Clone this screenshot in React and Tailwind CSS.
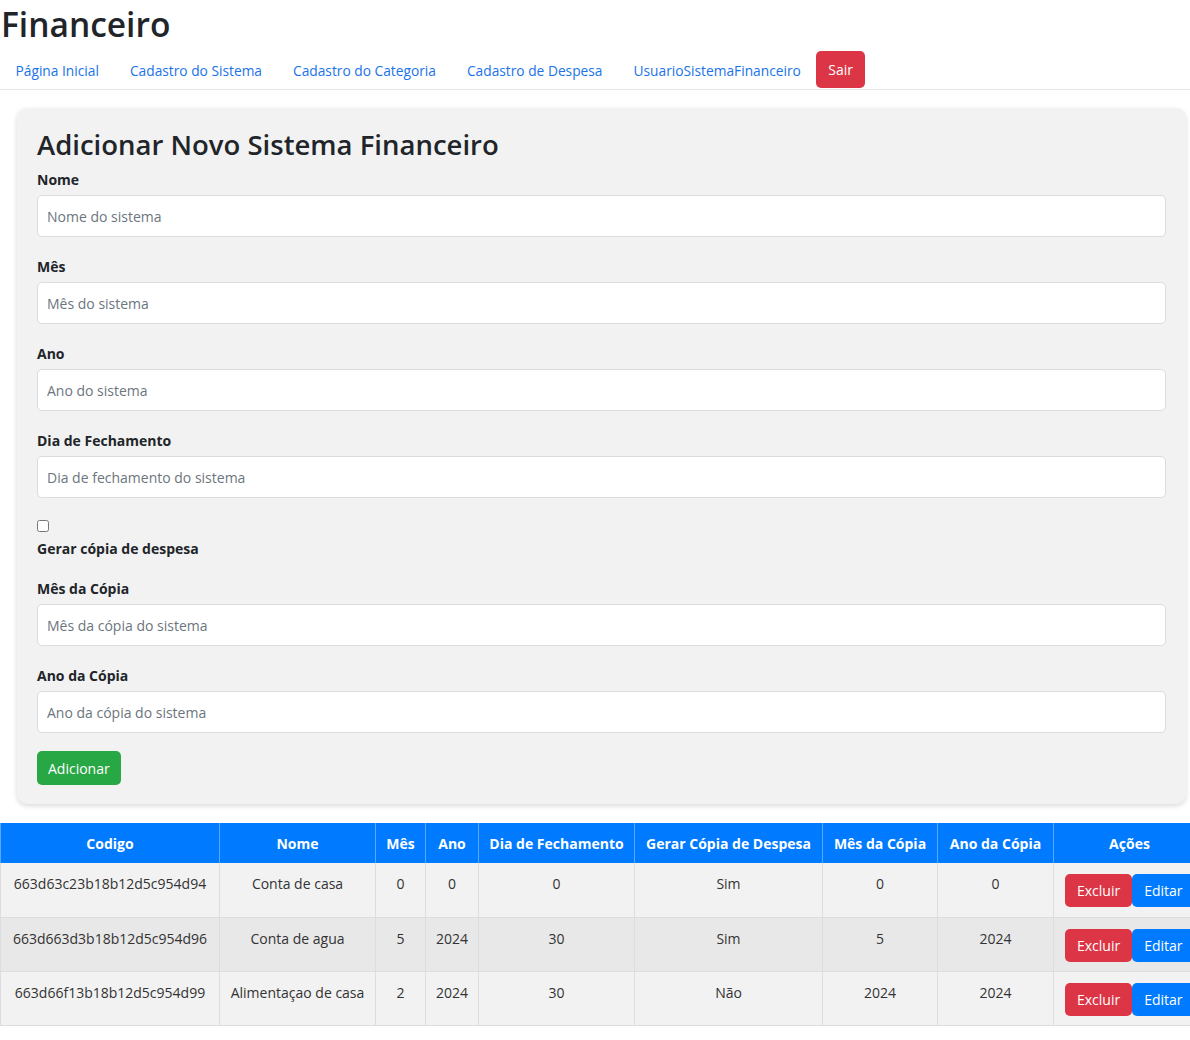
import React from "react";

const font = { fontFamily: '"Open Sans", "Noto Sans", sans-serif' };

const navLinks = [
  "Página Inicial",
  "Cadastro do Sistema",
  "Cadastro do Categoria",
  "Cadastro de Despesa",
  "UsuarioSistemaFinanceiro",
];

const fields = [
  { label: "Nome", placeholder: "Nome do sistema" },
  { label: "Mês", placeholder: "Mês do sistema" },
  { label: "Ano", placeholder: "Ano do sistema" },
  { label: "Dia de Fechamento", placeholder: "Dia de fechamento do sistema" },
];

const copyFields = [
  { label: "Mês da Cópia", placeholder: "Mês da cópia do sistema" },
  { label: "Ano da Cópia", placeholder: "Ano da cópia do sistema" },
];

const columns = [
  { title: "Codigo", w: "w-[219px]" },
  { title: "Nome", w: "w-[156px]" },
  { title: "Mês", w: "w-[50px]" },
  { title: "Ano", w: "w-[53px]" },
  { title: "Dia de Fechamento", w: "w-[156px]" },
  { title: "Gerar Cópia de Despesa", w: "w-[188px]" },
  { title: "Mês da Cópia", w: "w-[115px]" },
  { title: "Ano da Cópia", w: "w-[116px]" },
  { title: "Ações", w: "w-[152px]" },
];

const rows = [
  ["663d63c23b18b12d5c954d94", "Conta de casa", "0", "0", "0", "Sim", "0", "0"],
  ["663d663d3b18b12d5c954d96", "Conta de agua", "5", "2024", "30", "Sim", "5", "2024"],
  ["663d66f13b18b12d5c954d99", "Alimentaçao de casa", "2", "2024", "30", "Não", "2024", "2024"],
];

function Field({ label, placeholder }) {
  return (
    <div className="mb-[20px]">
      <label className="block text-[14px] font-bold text-[#212529] leading-[20px] mb-[5px]">
        {label}
      </label>
      <input
        type="text"
        placeholder={placeholder}
        className="block w-full h-[42px] px-[9px] bg-white border border-[#dcdcdc] rounded-[5px] text-[14px] text-[#495057] placeholder:text-[#6c757d] outline-none"
      />
    </div>
  );
}

export default function App() {
  return (
    <div className="w-[1190px] min-h-[1040px] bg-white overflow-hidden text-[#212529]" style={font}>
      {/* Header */}
      <h1 className="text-[33.5px] font-semibold leading-[48px] text-[#212529] pl-[1px]">
        Financeiro
      </h1>

      {/* Nav */}
      <nav className="flex items-center h-[42px] border-b border-[#e5e5e5] mb-[18px] pt-[5px]">
        {navLinks.map((link) => (
          <a key={link} href="#" className="px-[15.5px] text-[13.75px] text-[#1a73e8] leading-[20px]">
            {link}
          </a>
        ))}
        <button className="h-[37px] px-[12px] bg-[#dc3545] text-white text-[14px] rounded-[5px] -mt-[4px]">
          Sair
        </button>
      </nav>

      {/* Form card */}
      <div className="mx-[17px] w-[1169px] bg-[#f2f2f2] rounded-[10px] shadow-[0_2px_5px_rgba(0,0,0,0.15)] px-[20px] pt-[19px] pb-[19px]">
        <h2 className="text-[27.5px] font-semibold leading-[36px] text-[#212529] mb-[7px]">
          Adicionar Novo Sistema Financeiro
        </h2>
        {fields.map((f) => (
          <Field key={f.label} {...f} />
        ))}
        <div className="mb-[20px] mt-[22px]">
          <input
            type="checkbox"
            className="block w-[12px] h-[12px] m-0 mb-[7px] accent-[#007bff]"
          />
          <label className="block text-[14px] font-bold leading-[20px]">
            Gerar cópia de despesa
          </label>
        </div>
        {copyFields.map((f) => (
          <Field key={f.label} {...f} />
        ))}
        <button className="h-[34px] px-[11px] bg-[#28a745] text-white text-[14px] rounded-[5px] -mt-[2px]">
          Adicionar
        </button>
      </div>

      {/* Table */}
      <table className="mt-[19px] border-collapse table-fixed w-[1205px] text-[14px]">
        <thead>
          <tr className="bg-[#007bff] text-white h-[40px]">
            {columns.map((c) => (
              <th
                key={c.title}
                className={`${c.w} font-bold border-x border-[#5aa7ff] px-[8px] text-center`}
              >
                {c.title}
              </th>
            ))}
          </tr>
        </thead>
        <tbody>
          {rows.map((r, i) => (
            <tr
              key={r[0]}
              className={`${i === 1 ? "bg-[#e8e8e8]" : "bg-[#f2f2f2]"} h-[54px] border-b border-[#dddddd]`}
            >
              {r.map((cell, j) => (
                <td
                  key={j}
                  className="align-top text-center pt-[10px] text-[#333333] border-x border-[#dddddd] whitespace-nowrap"
                >
                  {cell}
                </td>
              ))}
              <td className="align-top pt-[11px] pl-[11px] border-x border-[#dddddd] whitespace-nowrap">
                <div className="flex">
                  <button className="h-[33px] px-[12px] bg-[#dc3545] text-white text-[14px] rounded-[5px]">
                    Excluir
                  </button>
                  <button className="h-[33px] px-[12px] bg-[#007bff] text-white text-[14px] rounded-[5px]">
                    Editar
                  </button>
                </div>
              </td>
            </tr>
          ))}
        </tbody>
      </table>
    </div>
  );
}
